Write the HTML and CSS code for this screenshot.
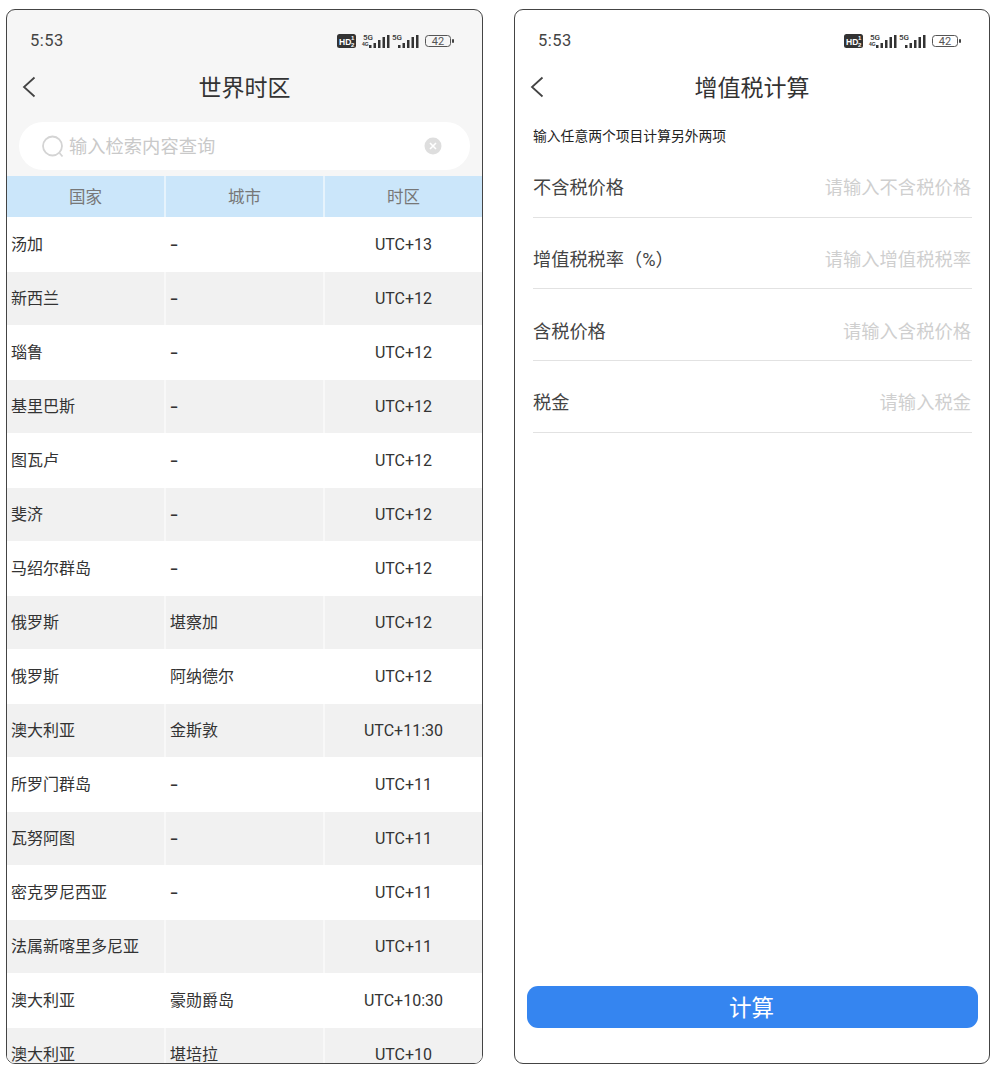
FILE: index.html
```html
<!DOCTYPE html>
<html lang="zh-CN">
<head>
<meta charset="utf-8">
<title>世界时区 / 增值税计算</title>
<link rel="stylesheet" href="styles.css">
</head>
<body>
<main class="stage">
  <section class="phone phone-zones">
    <div class="status">
      <span class="clock">5:53</span>
      <svg class="status-icons" viewBox="0 0 118 18" width="118" height="18" aria-hidden="true">
        <rect x="0" y="3" width="19" height="14" rx="2.5" fill="#333"/>
        <text x="2" y="13.500" class="t-hd">HD</text>
        <text x="14" y="9" class="t-tiny-w">1</text>
        <text x="14" y="15.500" class="t-tiny-w">2</text>
        <text x="26" y="9" class="t-5g">5G</text>
        <text x="25" y="15" class="t-4g">4G</text>
        <g fill="#333"><rect x="32" y="14" width="2.500" height="3"/><rect x="36.500" y="12" width="2.500" height="5"/><rect x="41" y="9" width="2.500" height="8"/><rect x="45.500" y="6" width="2.500" height="11"/><rect x="50" y="4" width="2.500" height="13"/></g>
        <text x="55" y="9" class="t-5g">5G</text>
        <g fill="#333"><rect x="61" y="14" width="2.500" height="3"/><rect x="65.500" y="12" width="2.500" height="5"/><rect x="70" y="9" width="2.500" height="8"/><rect x="74.500" y="6" width="2.500" height="11"/><rect x="79" y="4" width="2.500" height="13"/></g>
        <rect x="88.500" y="4.500" width="25" height="11" rx="3" fill="none" stroke="#555"/>
        <rect x="115" y="8" width="2" height="4" rx="1" fill="#444"/>
        <text x="101" y="14" class="t-batt">42</text>
      </svg>
    </div>
    <header class="nav">
      <svg class="back" viewBox="0 0 14 22" width="14" height="22" aria-hidden="true"><path d="M12.5 1.5 2 11l10.500 9.500" fill="none" stroke="#444" stroke-width="1.800"/></svg>
      <h1 class="nav-title">世界时区</h1>
    </header>
    <div class="search">
      <svg class="search-icon" viewBox="0 0 24 24" width="24" height="24" aria-hidden="true"><circle cx="11.500" cy="11" r="9.500" fill="none" stroke="#d4d4d4" stroke-width="1.800"/><path d="m18.500 18 3 3.500" stroke="#d4d4d4" stroke-width="1.800" fill="none"/></svg>
      <span class="search-text">输入检索内容查询</span>
      <svg class="clear-icon" viewBox="0 0 18 18" width="18" height="18" aria-hidden="true"><circle cx="9" cy="9" r="8.500" fill="#dedede"/><path d="m6 6 6 6m0-6-6 6" stroke="#fff" stroke-width="1.600"/></svg>
    </div>
    <div class="table">
      <div class="thead">
        <div class="th">国家</div><div class="th">城市</div><div class="th">时区</div>
      </div>
      <div class="tr"><div class="td">汤加</div><div class="td"><span class="dash">-</span></div><div class="td zone">UTC+13</div></div>
      <div class="tr alt"><div class="td">新西兰</div><div class="td"><span class="dash">-</span></div><div class="td zone">UTC+12</div></div>
      <div class="tr"><div class="td">瑙鲁</div><div class="td"><span class="dash">-</span></div><div class="td zone">UTC+12</div></div>
      <div class="tr alt"><div class="td">基里巴斯</div><div class="td"><span class="dash">-</span></div><div class="td zone">UTC+12</div></div>
      <div class="tr"><div class="td">图瓦卢</div><div class="td"><span class="dash">-</span></div><div class="td zone">UTC+12</div></div>
      <div class="tr alt"><div class="td">斐济</div><div class="td"><span class="dash">-</span></div><div class="td zone">UTC+12</div></div>
      <div class="tr"><div class="td">马绍尔群岛</div><div class="td"><span class="dash">-</span></div><div class="td zone">UTC+12</div></div>
      <div class="tr alt"><div class="td">俄罗斯</div><div class="td">堪察加</div><div class="td zone">UTC+12</div></div>
      <div class="tr"><div class="td">俄罗斯</div><div class="td">阿纳德尔</div><div class="td zone">UTC+12</div></div>
      <div class="tr alt"><div class="td">澳大利亚</div><div class="td">金斯敦</div><div class="td zone">UTC+11:30</div></div>
      <div class="tr"><div class="td">所罗门群岛</div><div class="td"><span class="dash">-</span></div><div class="td zone">UTC+11</div></div>
      <div class="tr alt"><div class="td">瓦努阿图</div><div class="td"><span class="dash">-</span></div><div class="td zone">UTC+11</div></div>
      <div class="tr"><div class="td">密克罗尼西亚</div><div class="td"><span class="dash">-</span></div><div class="td zone">UTC+11</div></div>
      <div class="tr alt"><div class="td">法属新喀里多尼亚</div><div class="td"></div><div class="td zone">UTC+11</div></div>
      <div class="tr"><div class="td">澳大利亚</div><div class="td">豪勋爵岛</div><div class="td zone">UTC+10:30</div></div>
      <div class="tr alt"><div class="td">澳大利亚</div><div class="td">堪培拉</div><div class="td zone">UTC+10</div></div>
    </div>
  </section>

  <section class="phone phone-tax">
    <div class="status">
      <span class="clock">5:53</span>
      <svg class="status-icons" viewBox="0 0 118 18" width="118" height="18" aria-hidden="true">
        <rect x="0" y="3" width="19" height="14" rx="2.5" fill="#333"/>
        <text x="2" y="13.500" class="t-hd">HD</text>
        <text x="14" y="9" class="t-tiny-w">1</text>
        <text x="14" y="15.500" class="t-tiny-w">2</text>
        <text x="26" y="9" class="t-5g">5G</text>
        <text x="25" y="15" class="t-4g">4G</text>
        <g fill="#333"><rect x="32" y="14" width="2.500" height="3"/><rect x="36.500" y="12" width="2.500" height="5"/><rect x="41" y="9" width="2.500" height="8"/><rect x="45.500" y="6" width="2.500" height="11"/><rect x="50" y="4" width="2.500" height="13"/></g>
        <text x="55" y="9" class="t-5g">5G</text>
        <g fill="#333"><rect x="61" y="14" width="2.500" height="3"/><rect x="65.500" y="12" width="2.500" height="5"/><rect x="70" y="9" width="2.500" height="8"/><rect x="74.500" y="6" width="2.500" height="11"/><rect x="79" y="4" width="2.500" height="13"/></g>
        <rect x="88.500" y="4.500" width="25" height="11" rx="3" fill="none" stroke="#555"/>
        <rect x="115" y="8" width="2" height="4" rx="1" fill="#444"/>
        <text x="101" y="14" class="t-batt">42</text>
      </svg>
    </div>
    <header class="nav">
      <svg class="back" viewBox="0 0 14 22" width="14" height="22" aria-hidden="true"><path d="M12.5 1.5 2 11l10.500 9.500" fill="none" stroke="#444" stroke-width="1.800"/></svg>
      <h1 class="nav-title">增值税计算</h1>
    </header>
    <p class="hint">输入任意两个项目计算另外两项</p>
    <div class="form">
      <div class="field"><span class="label">不含税价格</span><span class="placeholder">请输入不含税价格</span></div>
      <div class="field"><span class="label">增值税税率（%）</span><span class="placeholder">请输入增值税税率</span></div>
      <div class="field"><span class="label">含税价格</span><span class="placeholder">请输入含税价格</span></div>
      <div class="field"><span class="label">税金</span><span class="placeholder">请输入税金</span></div>
    </div>
    <button class="submit" type="button">计算</button>
  </section>
</main>
</body>
</html>
```
FILE: styles.css
```css
* { box-sizing: border-box; }

html, body { margin: 0; padding: 0; background: #fff; }

body {
  font-family: Roboto, "Noto Sans CJK SC", sans-serif;
  color: #333;
}

.stage {
  display: flex;
  align-items: flex-start;
  gap: 31px;
  padding: 9px 0 0 6px;
}

.phone {
  display: flex;
  flex-direction: column;
  height: 1055px;
  border: 1px solid #444;
  border-radius: 9px;
  overflow: hidden;
  background: #fff;
}

.phone-zones { width: 477px; background: linear-gradient(#f6f6f6 0 170px, #fff 170px); }
.phone-tax { width: 476px; }

.status {
  display: flex;
  flex: none;
  align-items: center;
  justify-content: space-between;
  height: 60px;
  padding: 0 27px 0 23px;
}

.clock {
  font-size: 16.500px;
  letter-spacing: 0.5px;
  color: #444;
}

.status-icons { display: block; }
.t-hd { font: 700 8.500px "Liberation Sans", sans-serif; fill: #fff; }
.t-tiny-w { font: 700 6px "Liberation Sans", sans-serif; fill: #fff; }
.t-5g { font: 500 8px Roboto, sans-serif; fill: #333; }
.t-4g { font: 700 5px "Liberation Sans", sans-serif; fill: #333; }
.t-batt { font: 400 11px Roboto, sans-serif; fill: #555; text-anchor: middle; }

.nav {
  display: flex;
  flex: none;
  position: relative;
  align-items: center;
  justify-content: center;
  height: 34px;
}

.back { position: absolute; left: 15px; top: 6px; }

.nav-title {
  margin: 0 0 2px;
  font-size: 23px;
  font-weight: 400;
  color: #333;
}

.search {
  display: flex;
  flex: none;
  align-items: center;
  height: 48px;
  margin: 18px 12px 6px;
  padding: 0 28px 0 22px;
  border-radius: 24px;
  background: #fff;
}

.search-icon { flex: none; margin-top: 1px; }

.search-text {
  flex: 1;
  margin: 0 0 3px 4px;
  font-size: 18.300px;
  color: #c9c9c9;
}

.clear-icon { flex: none; }

.table { flex: none; }

.thead, .tr {
  display: grid;
  grid-template-columns: repeat(3, 157px);
  column-gap: 2px;
}

.thead {
  margin-bottom: 1px;
  background: #e6f3fc;
}

.th {
  height: 41px;
  line-height: 43px;
  text-align: center;
  font-size: 16.500px;
  color: #777;
  background: #cbe6fa;
}

.tr { margin-bottom: 1px; }

.tr.alt { background: #f8f8f8; }

.td {
  height: 53px;
  padding-left: 4px;
  line-height: 54px;
  font-size: 16px;
  color: #333;
}

.alt .td { background: #f1f1f1; }

.td.zone { padding-left: 0; text-align: center; }

.dash {
  display: inline-block;
  font-weight: 500;
  transform: scaleX(1.500);
  transform-origin: left center;
}

.hint {
  flex: none;
  margin: 22px 0 0;
  padding-left: 18px;
  height: 20px;
  line-height: 20px;
  font-size: 13.800px;
  color: #222;
}

.form {
  display: flex;
  flex: none;
  flex-direction: column;
  margin: 0 17px 0 18px;
}

.field {
  display: flex;
  align-items: center;
  justify-content: space-between;
  height: 71.700px;
  padding-top: 10px;
  border-bottom: 1px solid #e2e2e2;
}

.label { font-size: 18.200px; color: #444; }
.placeholder { padding-right: 1px; font-size: 18.300px; color: #cfcfcf; }

.submit {
  flex: none;
  display: block;
  width: 451px;
  height: 42px;
  margin: auto 0 35px 12px;
  padding: 0 2px 3px 0;
  border: 0;
  border-radius: 11px;
  background: #3585f0;
  color: #fff;
  font-family: inherit;
  font-size: 22.500px;
}
```
